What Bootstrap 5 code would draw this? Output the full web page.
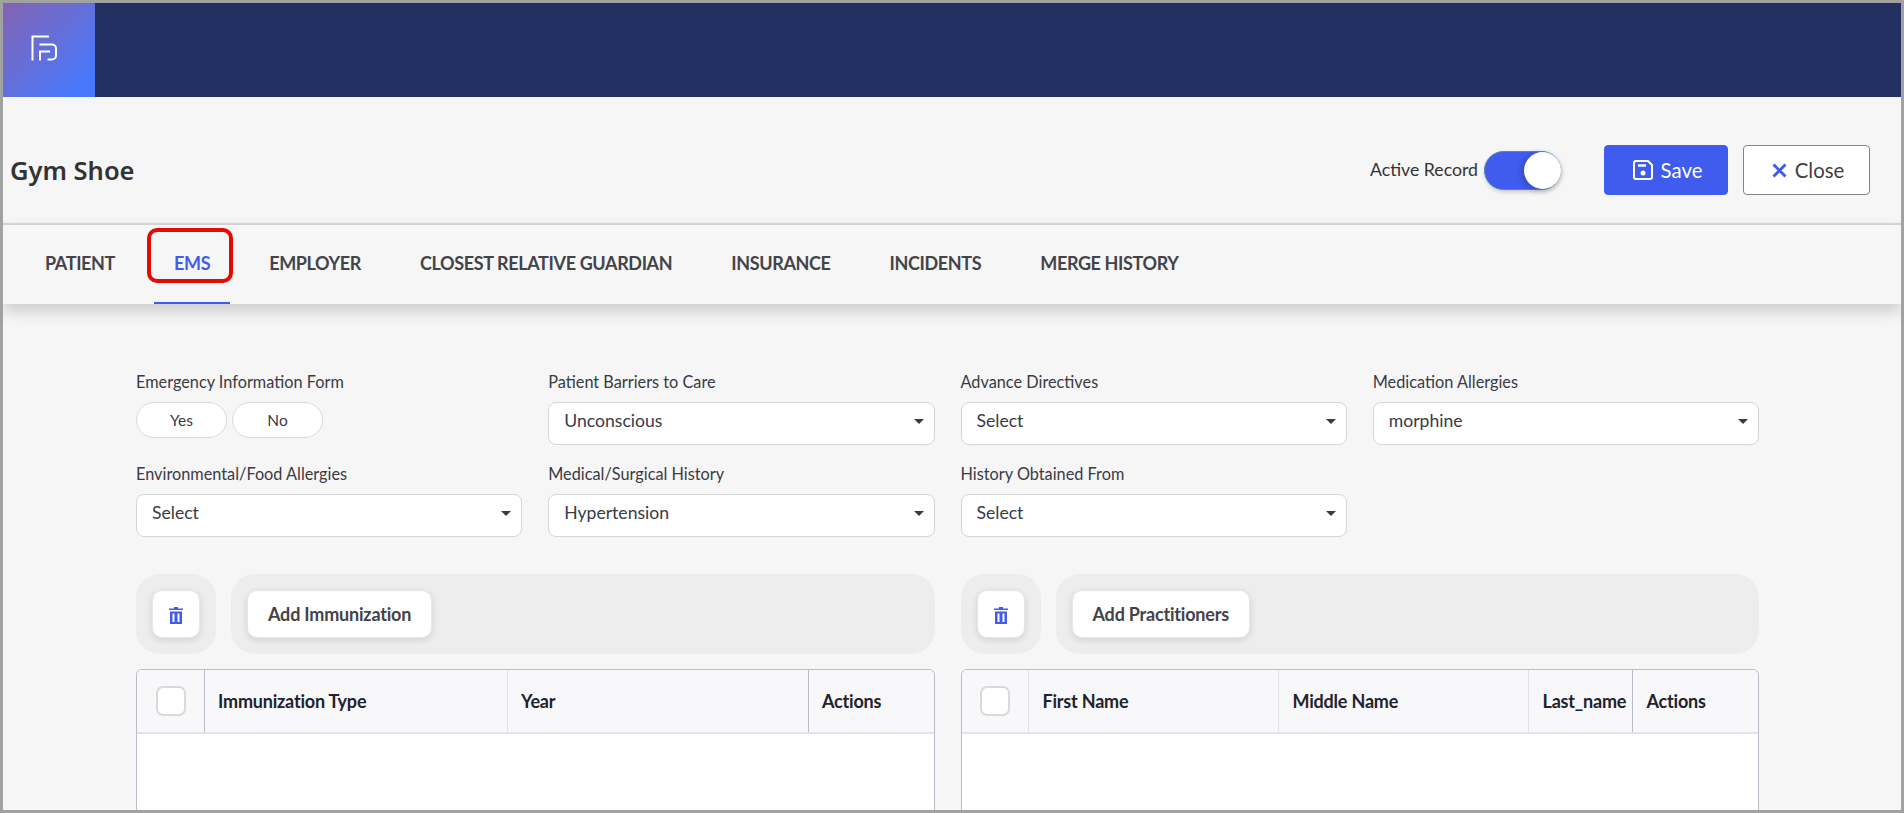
<!DOCTYPE html>
<html lang="en">
<head>
  <meta charset="UTF-8">
  <meta name="viewport" content="width=device-width, initial-scale=1.0">
  <title>Gym Shoe - EMS</title>
  <link href="https://cdn.jsdelivr.net/npm/bootstrap@5.3.2/dist/css/bootstrap.min.css" rel="stylesheet">
  <style>
    html, body { height: 100%; overflow: hidden; }
    body { font-family: Lato, "Liberation Sans", sans-serif; background: #f6f6f6; color: #3a3a44; }

    .app-frame { height: 813px; border: 3px solid #a2a2a2; overflow: hidden; background: #f6f6f6; }

    .top-bar { height: 94px; background: #233162; }
    .logo-box { width: 92px; height: 94px; padding: 0 0 4px 28px; background: linear-gradient(135deg, #8463b2 0%, #4a78fa 85%); }

    .title-bar { height: 126px; padding: 20px 31px 0 7px; }
    .page-title { font-family: "Noto Sans", sans-serif; font-size: 25.500px; font-weight: 600; color: #333; margin: 0; }
    .active-label { font-size: 17.700px; color: #333; margin-right: 6px; }
    .switch-track { width: 77px; height: 39px; border-radius: 20px; background: #405cee; border: 1px solid #4b8ab0; padding: 0 0 0 39px; margin-right: 43px; box-shadow: 1px 2px 4px rgba(0,0,0,.2); }
    .switch-knob { display: block; width: 37px; height: 37px; border-radius: 50%; background: #fff; box-shadow: -3px 1px 6px rgba(0,0,0,.2); }
    .act-btn { height: 50px; font-size: 20.400px; display: inline-flex; align-items: center; justify-content: center; gap: 8px; border-radius: 4px; padding: 0 0 0 3px; }
    .save-btn { width: 124px; background: #405cee; border-color: #405cee; color: #fff; margin-right: 15px; }
    .close-btn { width: 127px; background: #fff; border-color: #848484; color: #3f3f3f; }

    .tab-strip { height: 81px; border-top: 2px solid #d2d2d2; padding-left: 12.500px; box-shadow: 0 8px 14px rgba(0,0,0,.16); position: relative; background: #f6f6f6; }
    .tab-strip .nav-link { position: relative; height: 79px; display: flex; align-items: center; padding: 0 29.500px 2px; font-size: 18px; font-weight: 700; color: #43434a; letter-spacing: -.37px; }
    .tab-strip .nav-link.active { color: #405cee; }
    .tab-strip .nav-link.active::after { content: ""; position: absolute; left: 9.500px; right: 9.500px; bottom: 0; height: 2px; background: #405cee; }
    .mark-box { position: absolute; left: 144px; top: 3px; width: 86px; height: 55px; border: 4px solid #e00d00; border-radius: 10px; }

    .form-area { padding: 67px 142px 0 133px; }
    .form-grid { --bs-gutter-x: 26px; --bs-gutter-y: 18px; }
    .field-label { display: block; font-size: 16.300px; line-height: 22px; margin-bottom: 9px; color: #3a3a44; }
    .pick-box { width: 100%; height: 43px; background: #fff; border: 1px solid #d6d6d6; border-radius: 8px; padding: 0 10px 4px 15px; font-size: 17.600px; color: #3a3a44; text-align: left; }
    .pick-box:hover, .pick-box:active { background: #fff; border-color: #d6d6d6; }
    .pill-group { gap: 5px; }
    .pill-btn { width: 91px; height: 36px; background: #fff; border: 1px solid #d9d9d9; border-radius: 18px; padding: 2px 0 0; font-size: 15.500px; color: #3a3a44; }

    .table-row { --bs-gutter-x: 26px; margin-top: 37px; }
    .tool-gap { gap: 15px; }
    .tool-tray { background: #ededed; border-radius: 24px; height: 80px; padding: 16px; }
    .tray-small { width: 80px; flex: none; }
    .tool-btn { height: 48px; background: #fff; border: 1px solid #e6e6e6; border-radius: 10px; box-shadow: 0 2px 7px rgba(0,0,0,.12); font-size: 18px; font-weight: 700; color: #43434a; padding: 0 20px; letter-spacing: -.2px; }
    .trash-btn { width: 48px; padding: 0; }

    .grid-wrap { margin-top: 15px; background: #fff; border: 1px solid #b9bcc9; border-bottom: 0; border-radius: 6px 6px 0 0; height: 200px; overflow: hidden; }
    .data-grid { table-layout: fixed; margin: 0; }
    .data-grid th { height: 63px; background: #f8f8fb; font-size: 18px; font-weight: 700; color: #22222c; vertical-align: middle; padding: 0 11px 0 13.500px; border-bottom: 2px solid #e2e2e8; border-right: 1px solid #e2e2e8; white-space: nowrap; letter-spacing: -.2px; }
    .data-grid th:last-child { border-right: 0; }
    .data-grid th.edge-right { border-right: 1px solid #b9bcc9; }
    .tick-box { display: block; width: 30px; height: 30px; margin-left: 5px; background: #fff; border: 2px solid #dadada; border-radius: 7px; }
  </style>
</head>
<body>
  <div class="app-frame">
    <!-- top bar -->
    <div class="top-bar">
      <div class="logo-box d-flex align-items-center">
        <svg width="26" height="26" viewBox="0 0 26 26" fill="none" stroke="#fff" stroke-width="2">
          <path d="M1.500 25.500V1.500H18"/>
          <path d="M8.500 9.500H21a4 4 0 0 1 4 4V20.500a4 4 0 0 1-4 4H16.500"/>
          <path d="M9 25.500V16.500H19"/>
        </svg>
      </div>
    </div>

    <!-- title -->
    <div class="title-bar d-flex align-items-center">
      <h1 class="page-title me-auto">Gym Shoe</h1>
      <span class="active-label">Active Record</span>
      <span class="switch-track"><span class="switch-knob"></span></span>
      <button class="btn act-btn save-btn" type="button">
        <svg width="20" height="20" viewBox="0 0 20 20" fill="none" stroke="#fff" stroke-width="2"><path d="M1 3a2 2 0 0 1 2-2H15l4 4V17a2 2 0 0 1-2 2H3a2 2 0 0 1-2-2z"/><path d="M5 5.500h8" stroke-width="2.500"/><circle cx="10" cy="13" r="2.500" fill="#fff" stroke="none"/></svg>
        Save
      </button>
      <button class="btn act-btn close-btn" type="button">
        <svg width="15" height="15" viewBox="0 0 15 15" fill="none" stroke="#405cee" stroke-width="3"><path d="M1.500 1.500l12 12M13.500 1.500l-12 12"/></svg>
        Close
      </button>
    </div>

    <!-- tabs -->
    <div class="tab-strip">
      <ul class="nav">
        <li class="nav-item"><a class="nav-link" href="#">PATIENT</a></li>
        <li class="nav-item"><a class="nav-link active" href="#">EMS</a></li>
        <li class="nav-item"><a class="nav-link" href="#">EMPLOYER</a></li>
        <li class="nav-item"><a class="nav-link" href="#">CLOSEST RELATIVE GUARDIAN</a></li>
        <li class="nav-item"><a class="nav-link" href="#">INSURANCE</a></li>
        <li class="nav-item"><a class="nav-link" href="#">INCIDENTS</a></li>
        <li class="nav-item"><a class="nav-link" href="#">MERGE HISTORY</a></li>
      </ul>
      <div class="mark-box"></div>
    </div>

    <!-- form -->
    <div class="form-area">
      <div class="row form-grid">
        <div class="col-3">
          <span class="field-label">Emergency Information Form</span>
          <div class="d-flex pill-group">
            <button class="btn pill-btn" type="button">Yes</button>
            <button class="btn pill-btn" type="button">No</button>
          </div>
        </div>
        <div class="col-3">
          <span class="field-label">Patient Barriers to Care</span>
          <button class="btn dropdown-toggle pick-box d-flex align-items-center justify-content-between" type="button">Unconscious</button>
        </div>
        <div class="col-3">
          <span class="field-label">Advance Directives</span>
          <button class="btn dropdown-toggle pick-box d-flex align-items-center justify-content-between" type="button">Select</button>
        </div>
        <div class="col-3">
          <span class="field-label">Medication Allergies</span>
          <button class="btn dropdown-toggle pick-box d-flex align-items-center justify-content-between" type="button">morphine</button>
        </div>
        <div class="col-3">
          <span class="field-label">Environmental/Food Allergies</span>
          <button class="btn dropdown-toggle pick-box d-flex align-items-center justify-content-between" type="button">Select</button>
        </div>
        <div class="col-3">
          <span class="field-label">Medical/Surgical History</span>
          <button class="btn dropdown-toggle pick-box d-flex align-items-center justify-content-between" type="button">Hypertension</button>
        </div>
        <div class="col-3">
          <span class="field-label">History Obtained From</span>
          <button class="btn dropdown-toggle pick-box d-flex align-items-center justify-content-between" type="button">Select</button>
        </div>
      </div>

      <div class="row table-row">
        <div class="col-6">
          <div class="d-flex tool-gap">
            <div class="tool-tray tray-small">
              <button class="btn tool-btn trash-btn" type="button" aria-label="Delete">
                <svg width="14" height="17" viewBox="0 0 14 17" fill="#405cee"><path d="M5 0h4v1.500h5V3H0V1.500h5z"/><path d="M1 4.500h12V17H1zM3.500 6.500v8.500h2V6.500zM8.500 6.500v8.500h2V6.500z" fill-rule="evenodd"/></svg>
              </button>
            </div>
            <div class="tool-tray flex-grow-1">
              <button class="btn tool-btn" type="button">Add Immunization</button>
            </div>
          </div>
          <div class="grid-wrap">
            <table class="table data-grid">
              <colgroup><col style="width: 67px"><col style="width: 303px"><col style="width: 301px"><col></colgroup>
              <thead>
                <tr>
                  <th class="edge-right"><span class="tick-box"></span></th>
                  <th>Immunization Type</th>
                  <th class="edge-right">Year</th>
                  <th>Actions</th>
                </tr>
              </thead>
            </table>
          </div>
        </div>
        <div class="col-6">
          <div class="d-flex tool-gap">
            <div class="tool-tray tray-small">
              <button class="btn tool-btn trash-btn" type="button" aria-label="Delete">
                <svg width="14" height="17" viewBox="0 0 14 17" fill="#405cee"><path d="M5 0h4v1.500h5V3H0V1.500h5z"/><path d="M1 4.500h12V17H1zM3.500 6.500v8.500h2V6.500zM8.500 6.500v8.500h2V6.500z" fill-rule="evenodd"/></svg>
              </button>
            </div>
            <div class="tool-tray flex-grow-1">
              <button class="btn tool-btn" type="button">Add Practitioners</button>
            </div>
          </div>
          <div class="grid-wrap">
            <table class="table data-grid">
              <colgroup><col style="width: 67px"><col style="width: 250px"><col style="width: 250px"><col style="width: 104px"><col></colgroup>
              <thead>
                <tr>
                  <th><span class="tick-box"></span></th>
                  <th>First Name</th>
                  <th>Middle Name</th>
                  <th class="edge-right">Last_name</th>
                  <th>Actions</th>
                </tr>
              </thead>
            </table>
          </div>
        </div>
      </div>
    </div>
  </div>
  <script src="https://cdn.jsdelivr.net/npm/bootstrap@5.3.2/dist/js/bootstrap.bundle.min.js"></script>
</body>
</html>
